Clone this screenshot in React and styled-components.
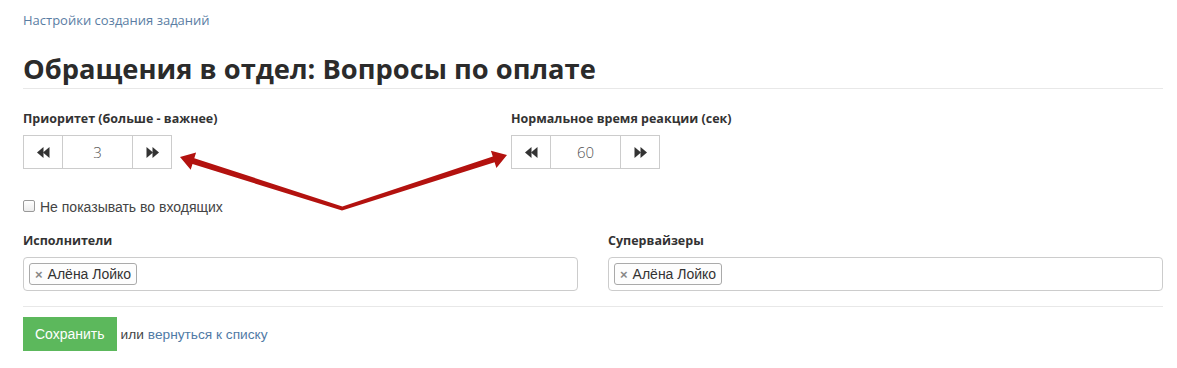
import React from "react";
import styled, { createGlobalStyle } from "styled-components";

const Global = createGlobalStyle`
  html, body { margin: 0; padding: 0; background: #fff; }
  body { font-family: "Liberation Sans", Arial, sans-serif; font-size: 13px; color: #333; }
  * { box-sizing: border-box; }
`;

const Page = styled.div`
  position: relative;
  width: 1177px;
  padding: 10px 14px 16px 23px;
`;

const Breadcrumb = styled.a`
  display: block;
  font-family: "Open Sans", sans-serif;
  font-size: 13px;
  line-height: 20px;
  color: #5a7da3;
  text-decoration: none;
`;

const Title = styled.h1`
  margin: 24px 0 0;
  padding-bottom: 4px;
  border-bottom: 1px solid #e8e8e8;
  font-family: "Open Sans", sans-serif;
  font-weight: 700;
  font-size: 27.3px;
  line-height: 30px;
  color: #2b2b2b;
`;

const Row = styled.div`
  display: grid;
  grid-template-columns: ${(p) => p.$cols};
  column-gap: 30px;
  margin-top: ${(p) => p.$mt}px;
`;

const Field = styled.div`
  display: flex;
  flex-direction: column;
  align-items: flex-start;
`;

const Label = styled.label`
  font-family: "Open Sans", sans-serif;
  font-weight: 700;
  font-size: 12.5px;
  line-height: 20px;
  color: #333;
  margin-bottom: 6px;
`;

const Spinner = styled.div`
  display: flex;
  height: 34px;
  border: 1px solid #ccc;
`;

const SpinBtn = styled.button`
  width: 38px;
  height: 32px;
  border: none;
  padding: 0;
  background: #fff;
  display: flex;
  align-items: center;
  justify-content: center;
  color: #333;
`;

const SpinInput = styled.div`
  width: 71px;
  height: 32px;
  border-left: 1px solid #ccc;
  border-right: 1px solid #ccc;
  display: flex;
  align-items: center;
  justify-content: center;
  font-family: "Open Sans", sans-serif;
  font-weight: 300;
  font-size: 15px;
  color: #555;
`;

const CheckRow = styled.label`
  display: flex;
  align-items: center;
  gap: 5px;
  margin-top: 28px;
  line-height: 20px;
  font-size: 14px;
  color: #444;
`;

const Box = styled.span`
  width: 12px;
  height: 12px;
  border: 1px solid #999;
  border-radius: 2px;
  background: linear-gradient(#fff, #ececec);
  margin-top: -3px;
`;

const Multi = styled.div`
  display: flex;
  align-items: center;
  width: 100%;
  height: 34px;
  border: 1px solid #ccc;
  border-radius: 4px;
  padding: 0 5px;
`;

const Tag = styled.span`
  display: inline-flex;
  align-items: center;
  gap: 5px;
  height: 22px;
  padding: 0 5px;
  border: 1px solid #aaa;
  border-radius: 3px;
  background: #fdfdfd;
  font-size: 14px;
  color: #333;
`;

const Remove = styled.span`
  color: #888;
  font-weight: 700;
  font-size: 13px;
`;

const Divider = styled.hr`
  margin: 15px 0 0;
  border: none;
  border-top: 1px solid #e8e8e8;
`;

const Actions = styled.div`
  display: flex;
  align-items: center;
  gap: 4px;
  margin-top: 10px;
  font-size: 13.7px;
  color: #444;
`;

const SaveBtn = styled.button`
  height: 34px;
  padding: 0 12px;
  border: none;
  background: #5cb85c;
  color: #fff;
  font-family: "Liberation Sans", Arial, sans-serif;
  font-size: 14px;
`;

const Link = styled.a`
  color: #4f7aa6;
  text-decoration: none;
`;

const Overlay = styled.svg`
  position: absolute;
  left: 0;
  top: 0;
  pointer-events: none;
`;

const Back = () => (
  <svg width="13" height="11" viewBox="0 0 13 11">
    <polygon points="0,5.5 6.5,0 6.5,11" fill="#333" />
    <polygon points="6,5.5 12.5,0 12.5,11" fill="#333" />
  </svg>
);
const Fwd = () => (
  <svg width="13" height="11" viewBox="0 0 13 11">
    <polygon points="0.5,0 7,5.5 0.5,11" fill="#333" />
    <polygon points="6.5,0 13,5.5 6.5,11" fill="#333" />
  </svg>
);

const NumSpin = ({ value }) => (
  <Spinner>
    <SpinBtn><Back /></SpinBtn>
    <SpinInput>{value}</SpinInput>
    <SpinBtn><Fwd /></SpinBtn>
  </Spinner>
);

export default function App() {
  return (
    <>
      <Global />
      <Page>
        <Breadcrumb href="#">Настройки создания заданий</Breadcrumb>
        <Title>Обращения в отдел: Вопросы по оплате</Title>
        <Row $cols="458px 1fr" $mt={20}>
          <Field>
            <Label>Приоритет (больше - важнее)</Label>
            <NumSpin value="3" />
          </Field>
          <Field>
            <Label>Нормальное время реакции (сек)</Label>
            <NumSpin value="60" />
          </Field>
        </Row>
        <CheckRow>
          <Box />
          Не показывать во входящих
        </CheckRow>
        <Row $cols="1fr 1fr" $mt={14}>
          <Field>
            <Label>Исполнители</Label>
            <Multi>
              <Tag><Remove>×</Remove>Алёна Лойко</Tag>
            </Multi>
          </Field>
          <Field>
            <Label>Супервайзеры</Label>
            <Multi>
              <Tag><Remove>×</Remove>Алёна Лойко</Tag>
            </Multi>
          </Field>
        </Row>
        <Divider />
        <Actions>
          <SaveBtn>Сохранить</SaveBtn>
          <span>или</span>
          <Link href="#">вернуться к списку</Link>
        </Actions>
        <Overlay width="1177" height="368">
          <polygon
            fill="#b3120f"
            points="180,157 196.1,152.6 194.3,158.3 342.4,206.4 492.8,156.4 490.9,150.7 507,155 496.4,167.9 494.6,162.2 342,210.5 192.5,164.1 190.7,169.8"
          />
        </Overlay>
      </Page>
    </>
  );
}
